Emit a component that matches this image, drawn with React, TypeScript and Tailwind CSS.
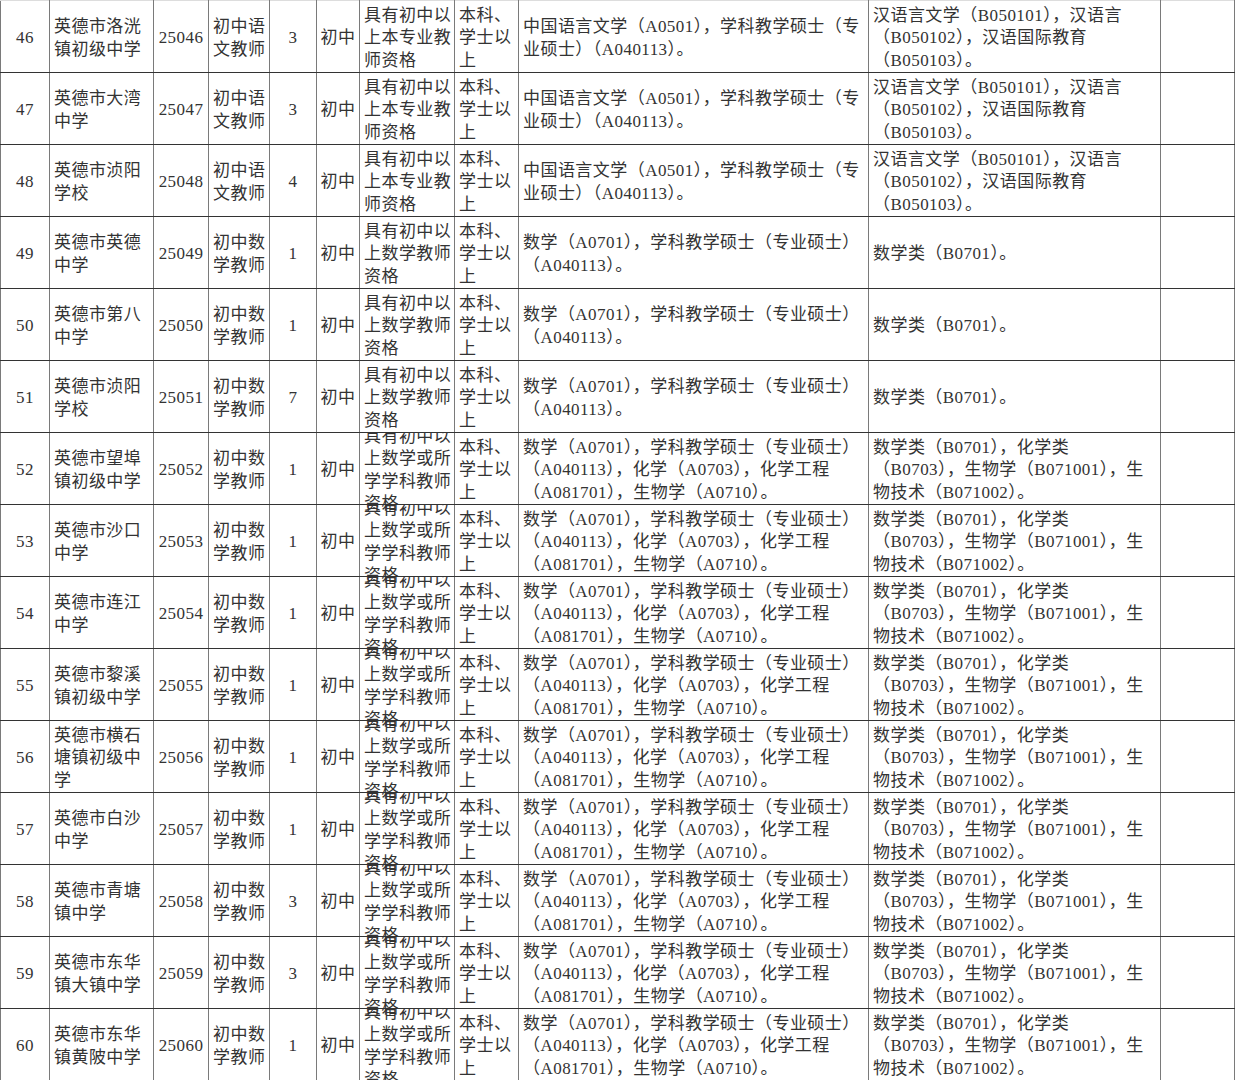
import React from 'react';

type Row = {
  no: number;
  school: string[];
  code: string;
  post: string[];
  count: number;
  qual: string[];
  edu: string[];
  master: string[];
  bachelor: string[];
};

const chineseMaster = ['中国语言文学（A0501），学科教学硕士（专', '业硕士）（A040113）。'];
const chineseBachelor = ['汉语言文学（B050101），汉语言', '（B050102），汉语国际教育', '（B050103）。'];
const mathMaster = ['数学（A0701），学科教学硕士（专业硕士）', '（A040113）。'];
const mixMaster = [
  '数学（A0701），学科教学硕士（专业硕士）',
  '（A040113），化学（A0703），化学工程',
  '（A081701），生物学（A0710）。',
];
const mixBachelor = ['数学类（B0701），化学类', '（B0703），生物学（B071001），生', '物技术（B071002）。'];
const edu = ['本科、', '学士以', '上'];

const chinese = (no: number, school: string[], count: number): Row => ({
  no,
  school,
  code: `250${no}`,
  post: ['初中语', '文教师'],
  count,
  qual: ['具有初中以', '上本专业教', '师资格'],
  edu,
  master: chineseMaster,
  bachelor: chineseBachelor,
});

const math = (no: number, school: string[], count: number): Row => ({
  no,
  school,
  code: `250${no}`,
  post: ['初中数', '学教师'],
  count,
  qual: ['具有初中以', '上数学教师', '资格'],
  edu,
  master: mathMaster,
  bachelor: ['数学类（B0701）。'],
});

// these rows have a 4-line qualification that spills past the row
const mix = (no: number, school: string[], count: number): Row => ({
  no,
  school,
  code: `250${no}`,
  post: ['初中数', '学教师'],
  count,
  qual: ['具有初中以', '上数学或所', '学学科教师', '资格'],
  edu,
  master: mixMaster,
  bachelor: mixBachelor,
});

const rows: Row[] = [
  chinese(46, ['英德市洛洸', '镇初级中学'], 3),
  chinese(47, ['英德市大湾', '中学'], 3),
  chinese(48, ['英德市浈阳', '学校'], 4),
  math(49, ['英德市英德', '中学'], 1),
  math(50, ['英德市第八', '中学'], 1),
  math(51, ['英德市浈阳', '学校'], 7),
  mix(52, ['英德市望埠', '镇初级中学'], 1),
  mix(53, ['英德市沙口', '中学'], 1),
  mix(54, ['英德市连江', '中学'], 1),
  mix(55, ['英德市黎溪', '镇初级中学'], 1),
  mix(56, ['英德市横石', '塘镇初级中', '学'], 1),
  mix(57, ['英德市白沙', '中学'], 1),
  mix(58, ['英德市青塘', '镇中学'], 3),
  mix(59, ['英德市东华', '镇大镇中学'], 3),
  mix(60, ['英德市东华', '镇黄陂中学'], 1),
];

function Cell({ lines, center }: { lines: string[]; center?: boolean }) {
  return (
    <td className="border-x border-y border-x-[#7a7a7a] border-y-[#333] p-0 align-middle">
      <div
        className={`flex h-[71px] flex-col justify-center pt-[4px] [clip-path:inset(0_-20px_-30px_-20px)] ${
          center ? 'items-center' : 'items-start pl-[4px]'
        }`}
      >
        {lines.map((l, i) => (
          <div key={i} className="whitespace-nowrap leading-[22.5px]">
            {l}
          </div>
        ))}
      </div>
    </td>
  );
}

export default function App() {
  return (
    <div className="bg-white">
      <table className="table-fixed border-collapse text-[17px] tracking-[0.45px] text-[#333] [font-family:'Liberation_Serif','Noto_Sans_CJK_SC',serif]">
        <colgroup>
          <col className="w-[49px]" />
          <col className="w-[104px]" />
          <col className="w-[55px]" />
          <col className="w-[61px]" />
          <col className="w-[47px]" />
          <col className="w-[43px]" />
          <col className="w-[95px]" />
          <col className="w-[64px]" />
          <col className="w-[350px]" />
          <col className="w-[292px]" />
          <col className="w-[74px]" />
        </colgroup>
        <tbody>
          {rows.map((r) => (
            <tr key={r.no} className="h-[72px] first:[&>td]:border-t-[#ddd]">
              <Cell lines={[String(r.no)]} center />
              <Cell lines={r.school} />
              <Cell lines={[r.code]} center />
              <Cell lines={r.post} />
              <Cell lines={[String(r.count)]} center />
              <Cell lines={['初中']} center />
              <Cell lines={r.qual} />
              <Cell lines={r.edu} />
              <Cell lines={r.master} />
              <Cell lines={r.bachelor} />
              <Cell lines={[]} />
            </tr>
          ))}
        </tbody>
      </table>
    </div>
  );
}
